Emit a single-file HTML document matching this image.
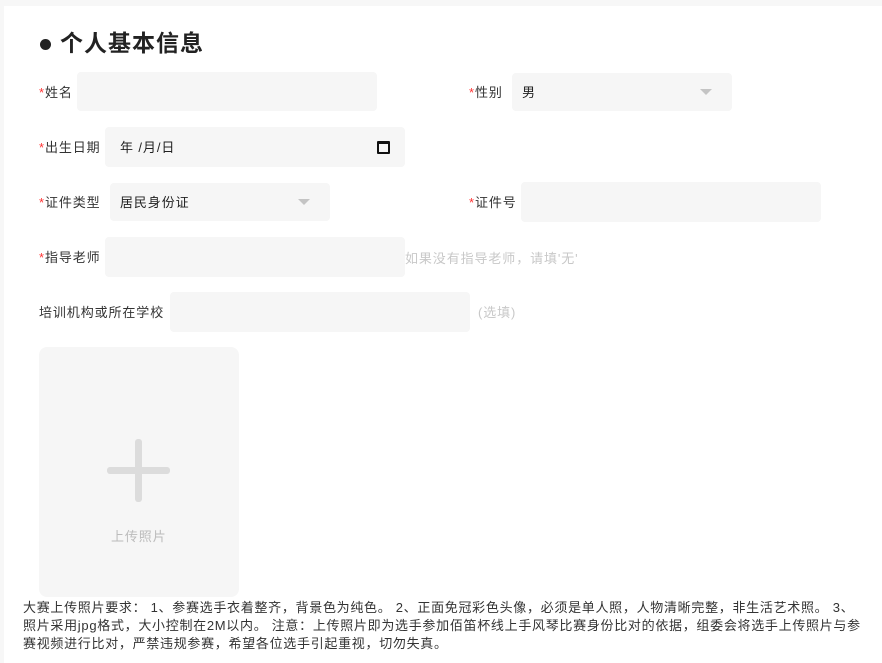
<!DOCTYPE html>
<html><head><meta charset="utf-8"><style>
*{margin:0;padding:0;box-sizing:border-box}
body{width:882px;height:663px;background:#f7f7f7;font-family:"Liberation Sans","Noto Sans CJK SC",sans-serif;font-size:13px;color:#333;position:relative;overflow:hidden}
.panel{position:absolute;left:4px;top:6px;width:878px;height:657px;background:#fff}
.a{position:absolute}
.lbl{position:absolute;font-size:13px;color:#333;line-height:16px;letter-spacing:.9px;white-space:nowrap}
.lbl i{color:#f33;font-style:normal}
.box{position:absolute;background:#f6f6f6;border-radius:4px}
.tri{position:absolute;width:0;height:0;border-left:6px solid transparent;border-right:6px solid transparent;border-top:6px solid #c4c4c4}
.hint{position:absolute;color:#c8c8c8;font-size:13px;line-height:16px;letter-spacing:.9px;white-space:nowrap}
</style></head><body>
<div class="panel"></div>
<div class="a" style="left:40px;top:39px;width:11px;height:11px;border-radius:50%;background:#222"></div>
<div class="a" style="left:60px;top:28px;font-size:23px;font-weight:bold;color:#222;line-height:30px;letter-spacing:1px">个人基本信息</div>

<div class="lbl" style="left:39px;top:85px"><i>*</i>姓名</div>
<div class="box" style="left:77px;top:72px;width:300px;height:39px"></div>

<div class="lbl" style="left:469px;top:85px"><i>*</i>性别</div>
<div class="box" style="left:512px;top:73px;width:220px;height:38px"></div>
<div class="lbl" style="left:522px;top:85px;color:#222">男</div>
<div class="tri" style="left:700px;top:89px"></div>

<div class="lbl" style="left:39px;top:140px"><i>*</i>出生日期</div>
<div class="box" style="left:105px;top:127px;width:300px;height:40px"></div>
<div class="lbl" style="left:120px;top:140px;color:#222">年 /月/日</div>
<div class="a" style="left:377px;top:141px;width:13px;height:13px;border:2px solid #111;border-top-width:3px;border-radius:1px"></div>

<div class="lbl" style="left:39px;top:195px"><i>*</i>证件类型</div>
<div class="box" style="left:110px;top:183px;width:220px;height:38px"></div>
<div class="lbl" style="left:120px;top:195px;color:#222">居民身份证</div>
<div class="tri" style="left:298px;top:199px"></div>

<div class="lbl" style="left:469px;top:195px"><i>*</i>证件号</div>
<div class="box" style="left:521px;top:182px;width:300px;height:40px"></div>

<div class="lbl" style="left:39px;top:250px"><i>*</i>指导老师</div>
<div class="box" style="left:105px;top:237px;width:300px;height:40px"></div>
<div class="hint" style="left:405px;top:251px">如果没有指导老师，请填'无'</div>

<div class="lbl" style="left:39px;top:305px">培训机构或所在学校</div>
<div class="box" style="left:170px;top:292px;width:300px;height:40px"></div>
<div class="hint" style="left:478px;top:305px">(选填)</div>

<div class="box" style="left:39px;top:347px;width:200px;height:250px;border-radius:8px"></div>
<div class="a" style="left:107px;top:467px;width:63px;height:7px;background:#dcdcdc;border-radius:3px"></div>
<div class="a" style="left:135px;top:439px;width:7px;height:63px;background:#dcdcdc;border-radius:3px"></div>
<div class="hint" style="left:111px;top:529px;color:#bbb">上传照片</div>

<div class="a" style="left:23px;top:599px;line-height:18px;font-size:13px;color:#333;white-space:nowrap;letter-spacing:.7px">大赛上传照片要求： 1、参赛选手衣着整齐，背景色为纯色。 2、正面免冠彩色头像，必须是单人照，人物清晰完整，非生活艺术照。 3、<br>照片采用jpg格式，大小控制在2M以内。 注意：上传照片即为选手参加佰笛杯线上手风琴比赛身份比对的依据，组委会将选手上传照片与参<br>赛视频进行比对，严禁违规参赛，希望各位选手引起重视，切勿失真。</div>
</body></html>
